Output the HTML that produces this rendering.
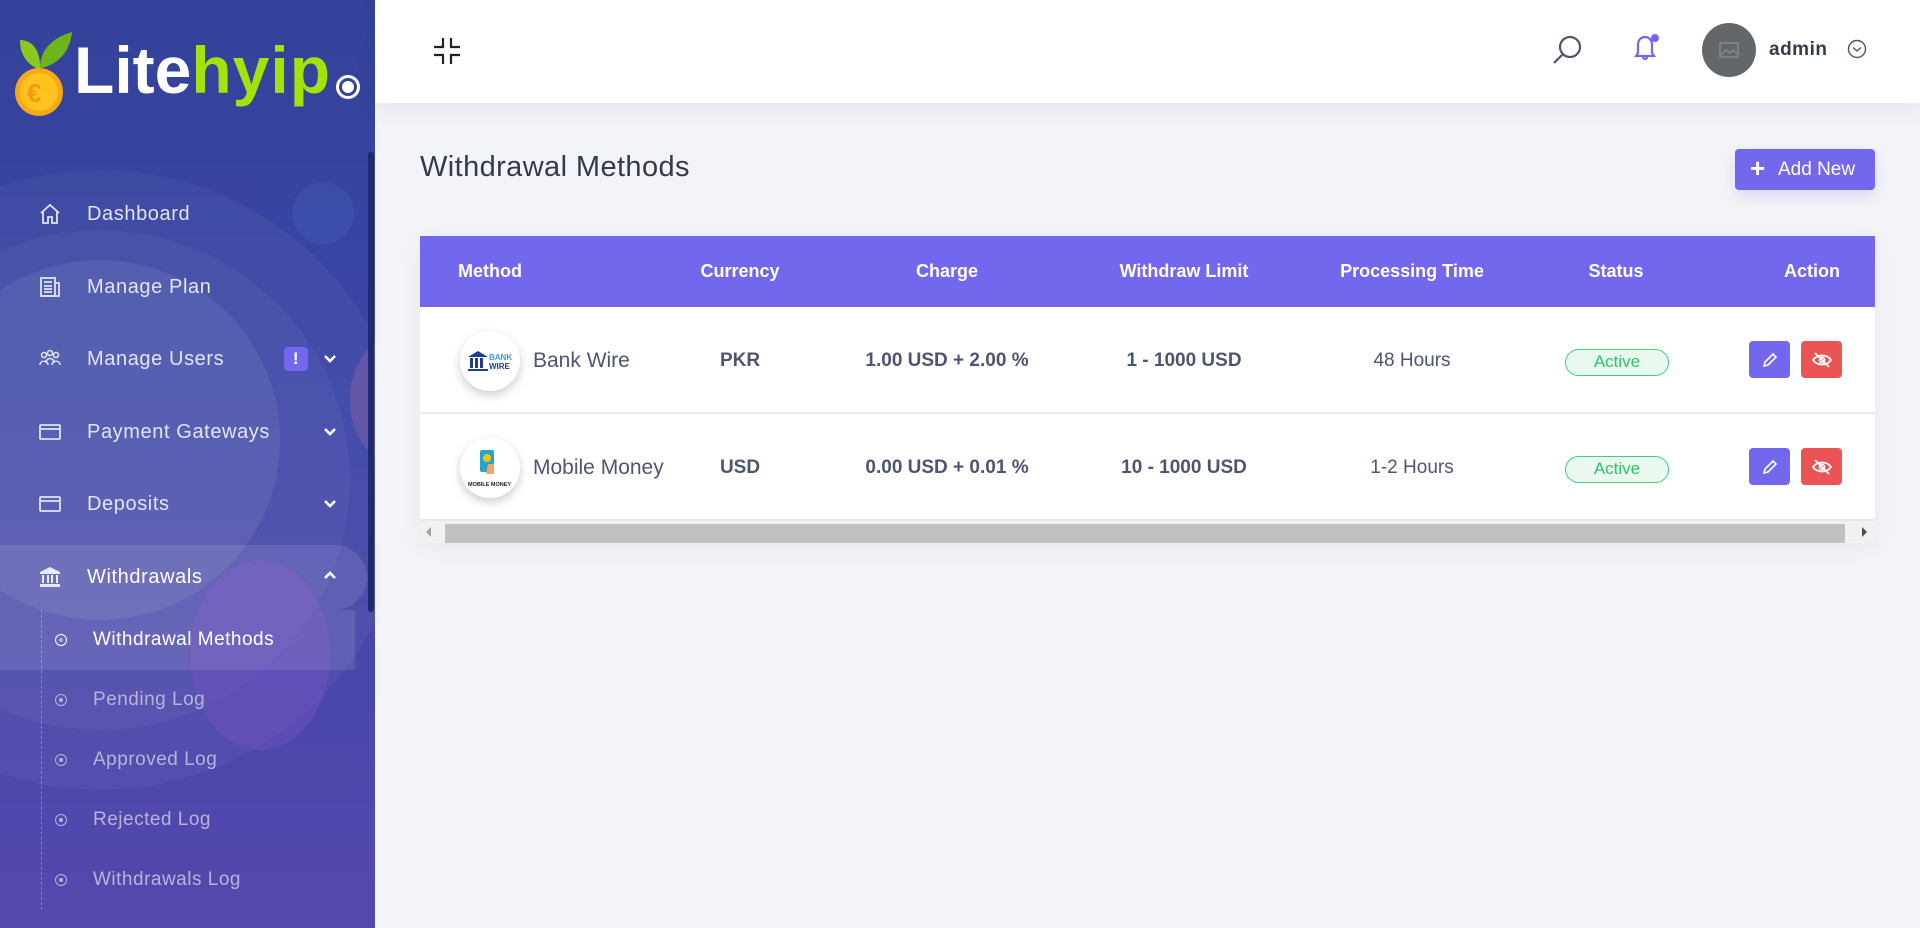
<!DOCTYPE html>
<html><head><meta charset="utf-8"><style>
*{box-sizing:border-box;margin:0;padding:0}
body{width:1920px;height:928px;overflow:hidden;background:#f3f4f7;font-family:"Liberation Sans",sans-serif;position:relative}
.sb{position:absolute;left:0;top:0;width:375px;height:928px;background:linear-gradient(180deg,#33429a 0%,#3c46a6 40%,#5548ad 100%);overflow:hidden}
.circ{position:absolute;border-radius:50%}
.mi{position:absolute;left:0;width:375px;height:40px;display:flex;align-items:center;color:#e1e4f3;font-size:20px;letter-spacing:.6px}
.mi svg{position:absolute;left:38px}
.mi span{position:absolute;left:87px}
.mi svg.chev{position:absolute;left:323px;top:14px}
.sub{position:absolute;left:0;height:40px;display:flex;align-items:center;font-size:19px;color:#b9b3dc;letter-spacing:.5px}
.sub .dot{position:absolute;left:55px;width:12px;height:12px;border:1.5px solid #b9b3dc;border-radius:50%}
.sub .dot:after{content:"";position:absolute;left:2.5px;top:2.5px;width:4px;height:4px;border-radius:50%;background:#b9b3dc}
.sub span{position:absolute;left:93px;white-space:nowrap}
.top{position:absolute;left:375px;top:0;right:0;height:103px;background:#fff;box-shadow:0 6px 20px rgba(40,50,100,.08)}
.tb{position:absolute;left:420px;top:236px;width:1455px;background:#fff;box-shadow:0 5px 20px rgba(0,0,0,.05)}
.hd{height:71px;background:#7367ed;position:relative}
.hd div{position:absolute;top:0;line-height:71px;color:#fff;font-weight:bold;font-size:18px;transform:translateX(-50%)}
.row{height:107px;position:relative;border-bottom:2px solid #e8e8ec}
.row div.c{position:absolute;top:0;line-height:107px;color:#4d5670;font-weight:bold;font-size:19px;transform:translateX(-50%);white-space:nowrap}
.logo{position:absolute;left:40px;top:24px;width:60px;height:60px;border-radius:50%;background:#fff;box-shadow:0 4px 10px rgba(0,0,0,.2)}
.nm{position:absolute;left:113px;top:0;line-height:107px;font-size:21px;color:#4d5670}
.badge{position:absolute;top:42px;width:104px;height:27px;border:1.5px solid #3ecf7a;border-radius:14px;background:#e9f9ef;color:#2ec36a;font-size:17px;text-align:center;line-height:24px}
.btn{position:absolute;top:34px;width:41px;height:37px;border-radius:4px;display:flex;align-items:center;justify-content:center}
</style></head><body>
<div class="sb">
 <div class="circ" style="left:-210px;top:170px;width:620px;height:620px;background:rgba(255,255,255,.04)"></div>
 <div class="circ" style="left:-150px;top:230px;width:500px;height:500px;background:rgba(255,255,255,.04)"></div>
 <div class="circ" style="left:-80px;top:260px;width:360px;height:360px;background:rgba(255,255,255,.07)"></div>
 <div class="circ" style="left:292px;top:182px;width:62px;height:62px;background:rgba(70,100,190,.3)"></div>
 <div class="circ" style="left:350px;top:340px;width:80px;height:120px;background:rgba(170,110,170,.3)"></div>
 <div class="circ" style="left:190px;top:560px;width:140px;height:190px;background:rgba(110,80,190,.55)"></div>
 <div style="position:absolute;left:368px;top:152px;width:6px;height:460px;background:#1f2b6a;border-radius:3px"></div>
 <svg style="position:absolute;left:14px;top:30px" width="60" height="88" viewBox="0 0 60 88">
  <path d="M26 40 C12 34 6 24 6 10 C18 10 26 20 26 36Z" fill="#8ac91c"/>
  <path d="M26 38 C26 20 38 8 58 2 C56 22 44 34 28 38Z" fill="#6fb51a"/>
  <circle cx="25" cy="62" r="24" fill="#f6a817"/><circle cx="25" cy="62" r="19" fill="#ffc21f"/>
  <text x="13" y="72" font-size="26" fill="#f29a12" font-weight="bold" font-family="Liberation Sans">€</text>
 </svg>
 <div style="position:absolute;left:74px;top:32px;font-size:66px;font-weight:bold;color:#fff;letter-spacing:0px;font-family:'Liberation Sans',sans-serif">Lite<span style="color:#a3e20a;letter-spacing:1px">hyip</span></div>
 <div class="circ" style="left:336px;top:75px;width:24px;height:24px;border:3px solid #fff"></div>
 <div class="circ" style="left:342px;top:81px;width:12px;height:12px;background:#fff"></div>

 <div class="mi" style="top:194px"><svg width="24" height="24" viewBox="0 0 24 24" fill="none" stroke="#dfe3f3" stroke-width="1.8"><path d="M3 11 L12 3 L21 11 M5 9 V21 H10 V15 H14 V21 H19 V9"/></svg><span>Dashboard</span></div>
 <div class="mi" style="top:267px"><svg width="24" height="24" viewBox="0 0 24 24" fill="none" stroke="#dfe3f3" stroke-width="1.8"><rect x="3" y="3" width="14" height="18"/><path d="M17 8 H21 V21 H3 M6 7 H14 M6 11 H14 M6 14 H14 M6 17 H14"/></svg><span>Manage Plan</span></div>
 <div class="mi" style="top:339px"><svg width="24" height="24" viewBox="0 0 24 24" fill="none" stroke="#dfe3f3" stroke-width="1.6"><circle cx="6" cy="8" r="2.5"/><circle cx="12" cy="6" r="2.5"/><circle cx="18" cy="8" r="2.5"/><path d="M2 18 C2 13 10 13 10 18 M8 16 C8 10 16 10 16 16 M14 18 C14 13 22 13 22 18"/></svg><span>Manage Users</span>
  <div style="position:absolute;left:284px;top:8px;width:24px;height:24px;border-radius:4px;background:#7367ed;color:#fff;font-weight:bold;text-align:center;line-height:24px;font-size:17px">!</div><svg class="chev" width="14" height="12" viewBox="0 0 14 12" fill="none" stroke="#fff" stroke-width="2.6"><path d="M2 3 L7 8 L12 3"/></svg></div>
 <div class="mi" style="top:412px"><svg width="24" height="24" viewBox="0 0 24 24" fill="none" stroke="#dfe3f3" stroke-width="1.8"><rect x="2" y="5" width="20" height="14" rx="1"/><path d="M2 9 H22"/></svg><span>Payment Gateways</span><svg class="chev" width="14" height="12" viewBox="0 0 14 12" fill="none" stroke="#fff" stroke-width="2.6"><path d="M2 3 L7 8 L12 3"/></svg></div>
 <div class="mi" style="top:484px"><svg width="24" height="24" viewBox="0 0 24 24" fill="none" stroke="#dfe3f3" stroke-width="1.8"><rect x="2" y="5" width="20" height="14" rx="1"/><path d="M2 9 H22"/></svg><span>Deposits</span><svg class="chev" width="14" height="12" viewBox="0 0 14 12" fill="none" stroke="#fff" stroke-width="2.6"><path d="M2 3 L7 8 L12 3"/></svg></div>
 <div style="position:absolute;left:0;top:545px;width:367px;height:65px;background:rgba(255,255,255,.1);border-radius:0 33px 33px 0"></div>
 <div class="mi" style="top:557px;color:#fff"><svg width="24" height="24" viewBox="0 0 24 24" fill="#e8eaf6"><path d="M12 2 L22 7 V9 H2 V7Z M4 10 H6 V18 H4Z M9 10 H11 V18 H9Z M13 10 H15 V18 H13Z M18 10 H20 V18 H18Z M2 19 H22 V22 H2Z"/></svg><span>Withdrawals</span><svg class="chev" width="14" height="12" viewBox="0 0 14 12" fill="none" stroke="#fff" stroke-width="2.6" style="top:12px"><path d="M2 9 L7 4 L12 9"/></svg></div>
 <div style="position:absolute;left:0;top:610px;width:355px;height:60px;background:rgba(255,255,255,.1)"></div>
 <div style="position:absolute;left:41px;top:610px;height:300px;border-left:1px dashed rgba(255,255,255,.3)"></div>
 <div class="sub" style="top:620px;color:#fff"><div class="dot" style="border-color:#fff"></div><span>Withdrawal Methods</span></div>
 <div class="sub" style="top:680px"><div class="dot"></div><span>Pending Log</span></div>
 <div class="sub" style="top:740px"><div class="dot"></div><span>Approved Log</span></div>
 <div class="sub" style="top:800px"><div class="dot"></div><span>Rejected Log</span></div>
 <div class="sub" style="top:860px"><div class="dot"></div><span>Withdrawals Log</span></div>
</div>

<div class="top">
 <svg style="position:absolute;left:57px;top:36px" width="30" height="30" viewBox="0 0 30 30" fill="none" stroke="#222" stroke-width="2.2"><path d="M11 2 V11 H2 M19 2 V11 H28 M2 19 H11 V28 M28 19 H19 V28"/></svg>
 <svg style="position:absolute;left:1176px;top:34px" width="32" height="32" viewBox="0 0 32 32" fill="none" stroke="#4d5670" stroke-width="2.2"><circle cx="19" cy="13" r="10"/><path d="M12 20 L3 29"/></svg>
 <svg style="position:absolute;left:1255px;top:32px" width="32" height="32" viewBox="0 0 32 32" fill="none" stroke="#7367ed" stroke-width="2.2"><path d="M6 24 H24 L22 21 V13 C22 8 19 5 15 5 C11 5 8 8 8 13 V21Z M13 25 A2 2 0 0 0 17 25"/><circle cx="25" cy="6" r="4" fill="#7367ed" stroke="none"/></svg>
 <div class="circ" style="left:1327px;top:23px;width:54px;height:54px;background:#636769"></div>
 <svg style="position:absolute;left:1344px;top:42px" width="20" height="16" viewBox="0 0 20 16" fill="none" stroke="#858a8c" stroke-width="1.5"><rect x="1" y="1" width="18" height="14"/><path d="M2 13 L7 8 L11 11 L14 8 L18 12"/></svg>
 <div style="position:absolute;left:1394px;top:39px;font-size:19px;font-weight:bold;color:#333b4a;letter-spacing:.5px">admin</div>
 <svg style="position:absolute;left:1472px;top:39px" width="20" height="20" viewBox="0 0 20 20" fill="none" stroke="#4d5670" stroke-width="1.4"><circle cx="10" cy="10" r="8.5"/><path d="M6 8.5 L10 12 L14 8.5"/></svg>
</div>

<div style="position:absolute;left:420px;top:151px;font-size:29px;color:#333b4a;letter-spacing:.4px">Withdrawal Methods</div>
<div style="position:absolute;left:1735px;top:149px;width:140px;height:41px;background:#7367ed;border-radius:4px;color:#fff;font-size:19px;line-height:41px;box-shadow:0 6px 14px rgba(115,103,237,.2)"><span style="position:absolute;left:15px;font-size:26px;font-weight:bold;top:-1px">+</span><span style="position:absolute;left:43px">Add New</span></div>

<div class="tb">
 <div class="hd">
  <div style="left:38px;transform:none">Method</div>
  <div style="left:320px">Currency</div>
  <div style="left:527px">Charge</div>
  <div style="left:764px">Withdraw Limit</div>
  <div style="left:992px">Processing Time</div>
  <div style="left:1196px">Status</div>
  <div style="right:35px;transform:none">Action</div>
 </div>
 <div class="row">
  <div class="logo"><svg width="60" height="60" viewBox="0 0 60 60"><path d="M8 26 L18 20 L28 26Z M10 27 h3 v10 h-3z M15 27 h3 v10 h-3z M20 27 h3 v10 h-3z M8 38 h20 v2 h-20z" fill="#1e3f8f"/><text x="29" y="29" font-size="8" font-weight="bold" fill="#3aa0e0" font-family="Liberation Sans">BANK</text><text x="29" y="38" font-size="8" font-weight="bold" fill="#1e3f8f" font-family="Liberation Sans">WIRE</text></svg></div>
  <div class="nm">Bank Wire</div>
  <div class="c" style="left:320px">PKR</div>
  <div class="c" style="left:527px">1.00 USD + 2.00 %</div>
  <div class="c" style="left:764px">1 - 1000 USD</div>
  <div class="c" style="left:992px;font-weight:normal">48 Hours</div>
  <div class="badge" style="left:1145px">Active</div>
  <div class="btn" style="left:1329px;background:#7367ed"><svg width="18" height="18" viewBox="0 0 18 18" fill="none" stroke="#fff" stroke-width="1.6"><path d="M3 15 L4 11 L12 3 L15 6 L7 14Z"/></svg></div>
  <div class="btn" style="left:1381px;background:#ea5455"><svg width="22" height="18" viewBox="0 0 22 18" fill="none" stroke="#fff" stroke-width="1.8"><path d="M2 9 C6 3 16 3 20 9 C16 15 6 15 2 9Z"/><circle cx="11" cy="9" r="2.5"/><path d="M4 2 L18 16"/></svg></div>
 </div>
 <div class="row">
  <div class="logo"><svg width="60" height="60" viewBox="0 0 60 60"><rect x="20" y="12" width="14" height="22" rx="2" fill="#2aa3c8"/><circle cx="27" cy="20" r="4" fill="#f6c21f"/><path d="M28 26 h6 v10 h-8z" fill="#f5a56a"/><text x="8" y="48" font-size="5.5" font-weight="bold" fill="#222" font-family="Liberation Sans">MOBILE MONEY</text></svg></div>
  <div class="nm">Mobile Money</div>
  <div class="c" style="left:320px">USD</div>
  <div class="c" style="left:527px">0.00 USD + 0.01 %</div>
  <div class="c" style="left:764px">10 - 1000 USD</div>
  <div class="c" style="left:992px;font-weight:normal">1-2 Hours</div>
  <div class="badge" style="left:1145px">Active</div>
  <div class="btn" style="left:1329px;background:#7367ed"><svg width="18" height="18" viewBox="0 0 18 18" fill="none" stroke="#fff" stroke-width="1.6"><path d="M3 15 L4 11 L12 3 L15 6 L7 14Z"/></svg></div>
  <div class="btn" style="left:1381px;background:#ea5455"><svg width="22" height="18" viewBox="0 0 22 18" fill="none" stroke="#fff" stroke-width="1.8"><path d="M2 9 C6 3 16 3 20 9 C16 15 6 15 2 9Z"/><circle cx="11" cy="9" r="2.5"/><path d="M4 2 L18 16"/></svg></div>
 </div>
 <div style="height:22px;background:#f1f1f1;position:relative">
  <div style="position:absolute;left:25px;top:3px;width:1400px;height:19px;background:#c1c1c1"></div>
  <div style="position:absolute;left:6px;top:6px;border-right:5px solid #a3a3a3;border-top:5px solid transparent;border-bottom:5px solid transparent"></div>
  <div style="position:absolute;right:8px;top:6px;border-left:5px solid #505050;border-top:5px solid transparent;border-bottom:5px solid transparent"></div>
 </div>
</div>
</body></html>
